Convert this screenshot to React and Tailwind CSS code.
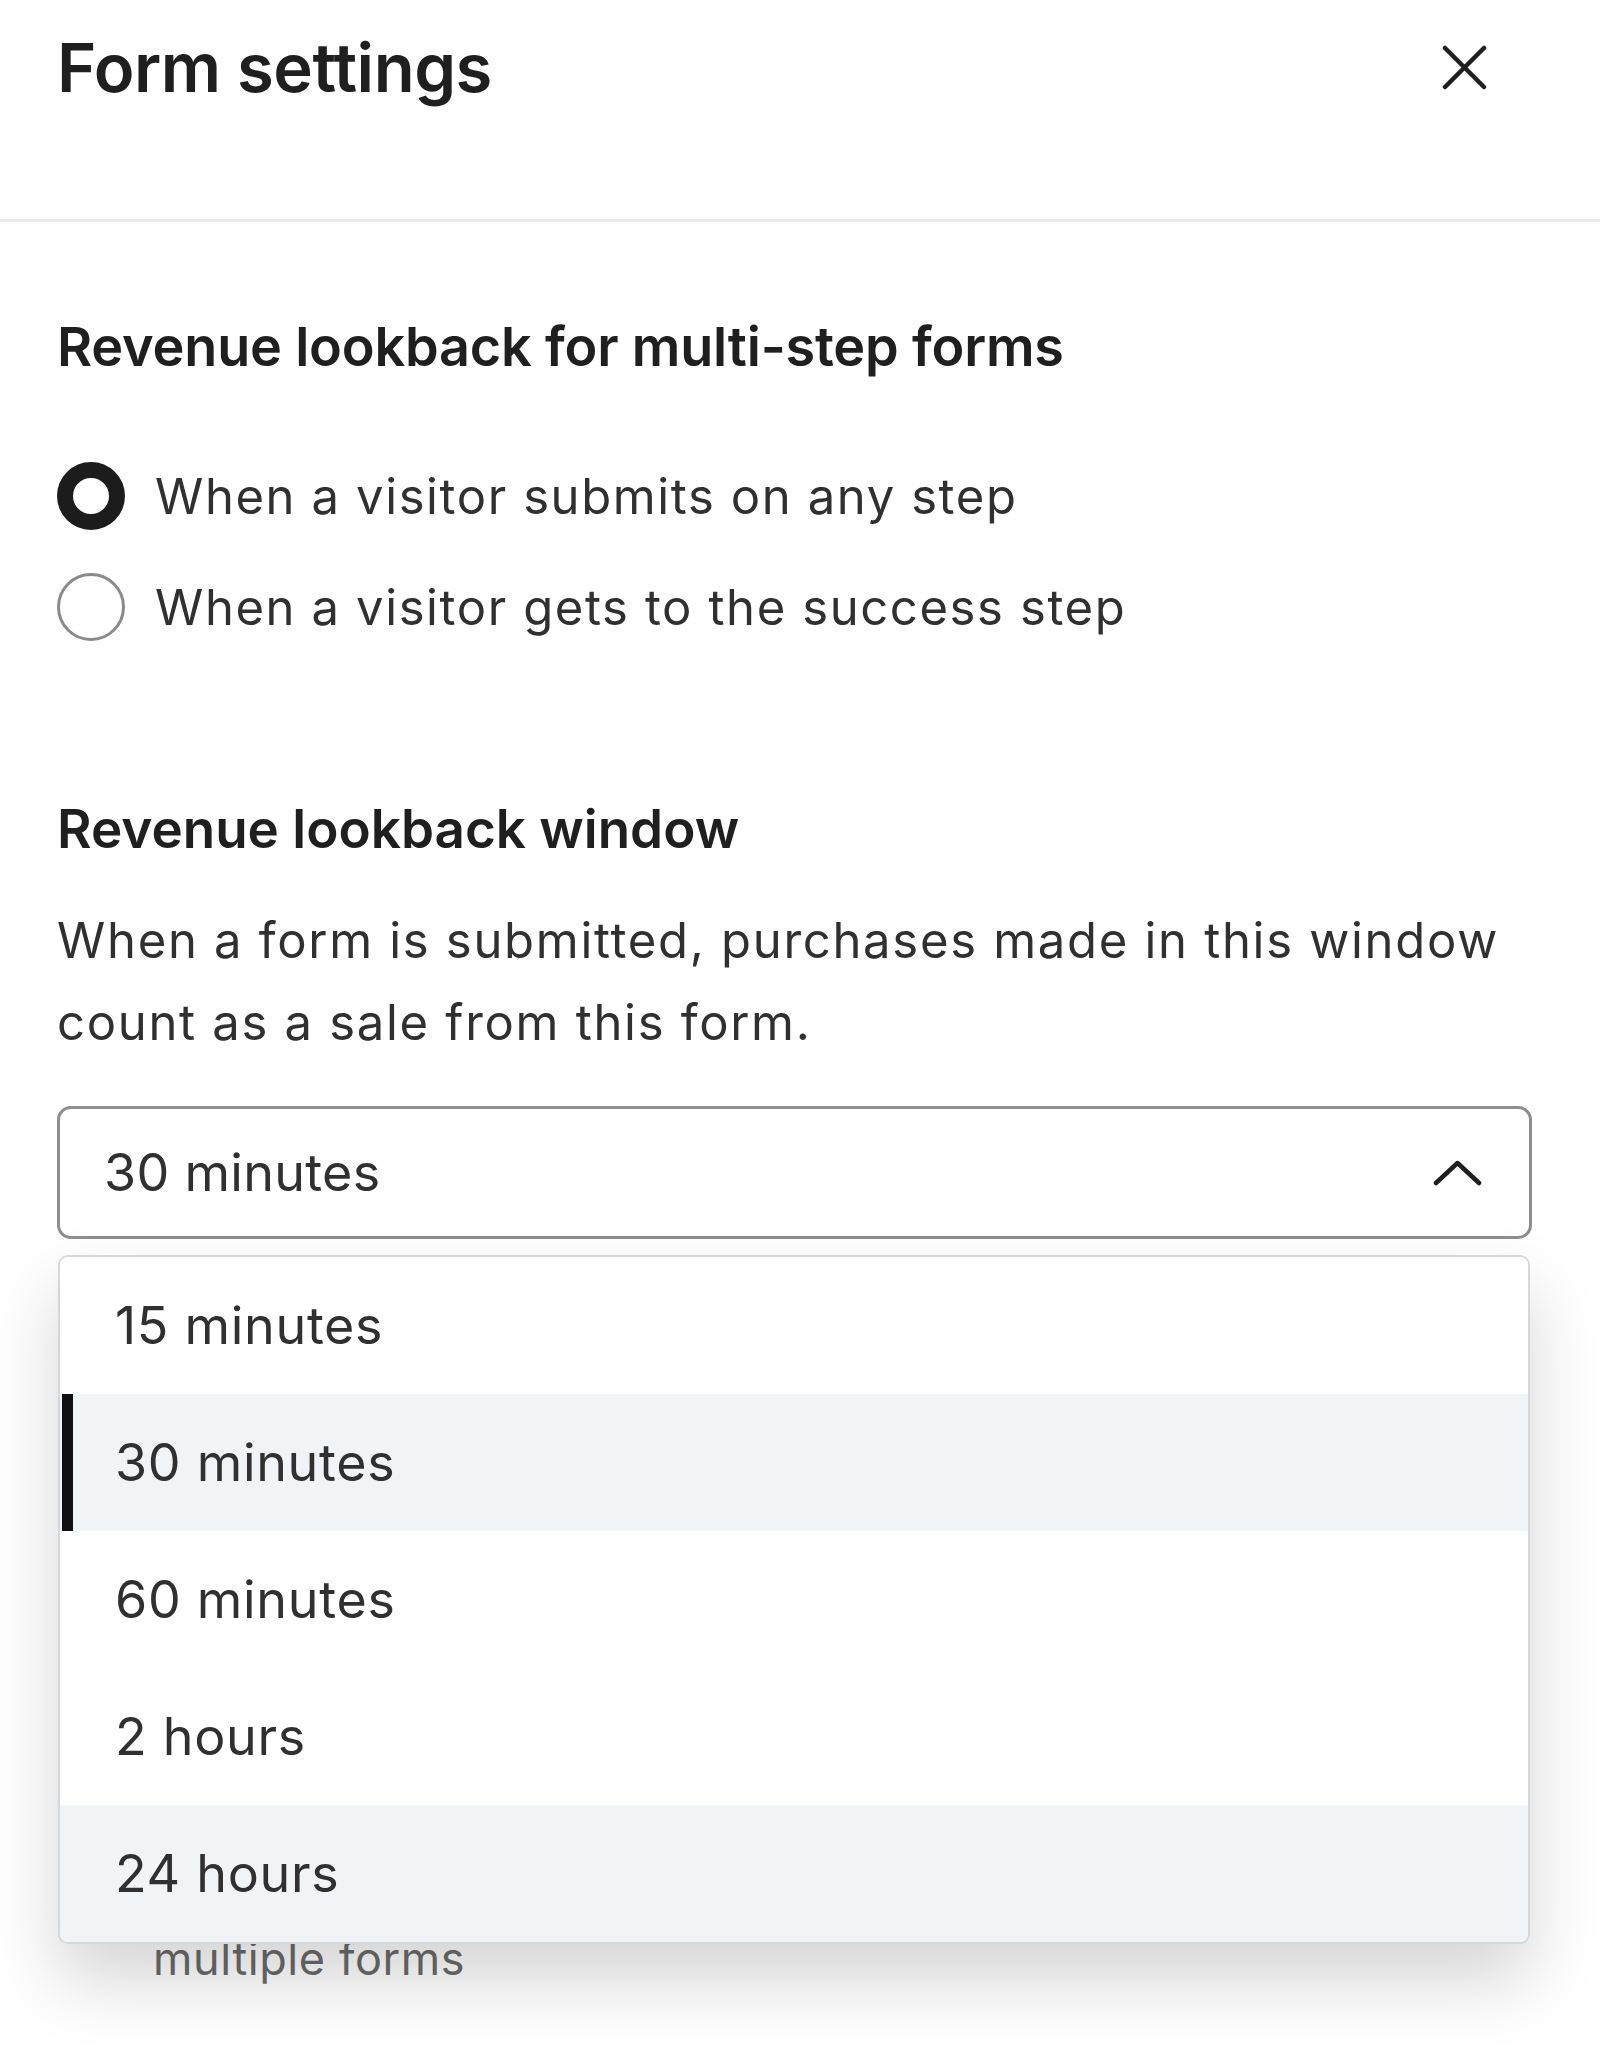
import React, { useState } from "react";

const options = ["15 minutes", "30 minutes", "60 minutes", "2 hours", "24 hours"];

const Radio = ({ checked, label }) => (
  <label className="flex items-center gap-[30px]">
    <span
      className={
        checked
          ? "w-[68px] h-[68px] rounded-full border-[16px] border-[#1c1c1c] bg-white shrink-0"
          : "w-[68px] h-[68px] rounded-full border-[3px] border-[#8a8a8a] bg-white shrink-0"
      }
    />
    <span className="text-[49px] leading-none tracking-[1.6px] text-[#303030]">{label}</span>
  </label>
);

export default function App() {
  const [value] = useState("30 minutes");
  const hovered = "24 hours";

  return (
    <div className="w-[1600px] h-[2069px] bg-white overflow-hidden font-['Inter',sans-serif] text-[#1f1f1f]">
      {/* header */}
      <div className="h-[222px] border-b-[3px] border-[#e6eaee] flex items-start justify-between pl-[57px] pr-[113px]">
        <h1 className="pt-[34px] text-[67px] leading-none font-semibold tracking-[-0.5px]">Form settings</h1>
        <svg width="45" height="45" viewBox="0 0 45 45" className="mt-[45px]" fill="none" stroke="#1f1f1f" strokeWidth="4.5" strokeLinecap="round">
          <path d="M3 3L42 42M42 3L3 42" />
        </svg>
      </div>

      <div className="pl-[57px] pr-[68px]">
        <h2 className="mt-[98px] text-[54px] leading-none font-semibold tracking-[-0.2px]">Revenue lookback for multi-step forms</h2>
        <div className="mt-[88px] flex flex-col gap-[43px]">
          <Radio checked label="When a visitor submits on any step" />
          <Radio label="When a visitor gets to the success step" />
        </div>

        <h2 className="mt-[162px] text-[53px] leading-none font-semibold">Revenue lookback window</h2>
        <p className="mt-[44px] text-[49px] leading-[82px] tracking-[1.7px] text-[#303030]">
          When a form is submitted, purchases made in this window
          <br />
          count as a sale from this form.
        </p>

        <div className="relative mt-[42px]">
          <button className="w-full h-[133px] border-[3px] border-[#8e8e8e] rounded-[14px] flex items-center justify-between pl-[44px] pr-[47px] bg-white">
            <span className="text-[52px] leading-none tracking-[0.3px] text-[#303030]">{value}</span>
            <svg width="49" height="26" viewBox="0 0 49 26" fill="none" stroke="#1f1f1f" strokeWidth="4.5" strokeLinecap="round" strokeLinejoin="round">
              <path d="M3 23L24.5 3L46 23" />
            </svg>
          </button>

          <ul className="absolute z-10 top-[149px] left-[1px] right-[2px] bg-white border-2 border-[#d3d8dd] rounded-[10px] overflow-hidden shadow-[0_36px_70px_rgba(0,0,0,0.17)]">
            {options.map((opt) => (
              <li
                key={opt}
                className={`h-[137px] flex items-stretch ${opt === value || opt === hovered ? "bg-[#f1f4f6]" : "bg-white"}`}
              >
                <span className={`w-[11px] ml-[2px] ${opt === value ? "bg-[#111111]" : ""}`} />
                <span className="pl-[42px] flex items-center text-[52px] leading-none tracking-[0.7px] text-[#303030]">{opt}</span>
              </li>
            ))}
          </ul>
        </div>

        <p className="mt-[697px] pl-[96px] text-[45px] leading-none tracking-[0.6px] text-[#6b6b6b]">multiple forms</p>
      </div>
    </div>
  );
}
